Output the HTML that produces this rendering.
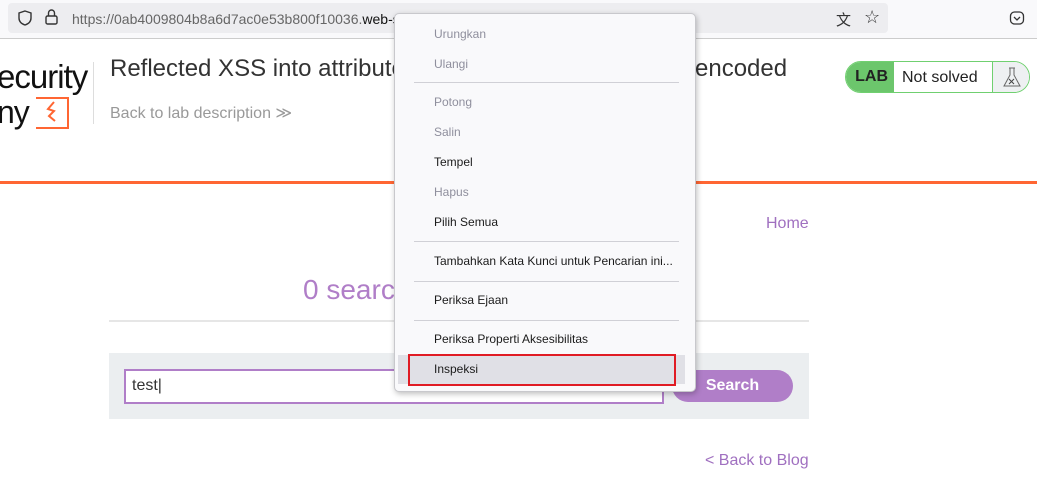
<!DOCTYPE html><html><head><style>
body{margin:0;width:1037px;height:483px;overflow:hidden;background:#fff;font-family:"Liberation Sans",sans-serif;position:relative}
.a{position:absolute}
.mi{position:absolute;left:434px;font-size:12px;color:#1b1b1b}
.dis{color:#8f8f9d}
.sep{position:absolute;left:414px;width:265px;height:1px;background:#d0d0d6}
</style></head><body>
<div class="a" style="left:0;top:0;width:1037px;height:38px;background:#f9f9fb;border-bottom:1px solid #ccc"></div>
<div class="a" style="left:8px;top:3px;width:880px;height:30px;background:#ededf0;border-radius:4px"></div>
<svg class="a" style="left:16px;top:9px" width="18" height="18"><path d="M9 2 L15 4 V9 Q15 14 9 16 Q3 14 3 9 V4Z" fill="none" stroke="#333" stroke-width="1.4"/></svg>
<svg class="a" style="left:44px;top:8px" width="16" height="18"><rect x="2" y="8" width="11" height="8" rx="1.5" fill="none" stroke="#333" stroke-width="1.4"/><path d="M4.5 8V5a3 3 0 0 1 6 0v3" fill="none" stroke="#333" stroke-width="1.4"/></svg>
<div class="a" style="left:72px;top:11px;font-size:14px;color:#666">https://0ab4009804b8a6d7ac0e53b800f10036.<span style="color:#111">web-se</span></div>
<div class="a" style="left:836px;top:9px;font-size:15px;color:#333">文</div>
<div class="a" style="left:864px;top:7px;font-size:18px;color:#333">☆</div>
<svg class="a" style="left:1009px;top:10px" width="16" height="16"><rect x="1.5" y="2" width="13" height="12" rx="4" fill="none" stroke="#333" stroke-width="1.3"/><path d="M5 7l3 3 3-3" fill="none" stroke="#333" stroke-width="1.3"/></svg>

<div class="a" style="left:-3px;top:58px;font-size:33px;color:#111;letter-spacing:-1px">ecurity</div>
<div class="a" style="left:-3px;top:94px;font-size:32px;color:#111;letter-spacing:-1px">ny</div>
<div class="a" style="left:36px;top:97px;width:31px;height:28px;border:2px solid #ff6633;border-left:none"></div>
<svg class="a" style="left:44px;top:100px" width="16" height="24"><path d="M10 2 L4 9 L10 11 L5 16 L11 21" fill="none" stroke="#ff6633" stroke-width="2"/></svg>
<div class="a" style="left:93px;top:62px;width:1px;height:62px;background:#ddd"></div>
<div class="a" style="left:110px;top:55px;font-size:24px;color:#333">Reflected XSS into attribute</div>
<div class="a" style="left:695px;top:55px;font-size:24px;color:#333">encoded</div>
<div class="a" style="left:110px;top:103px;font-size:16px;color:#999">Back to lab description ≫</div>
<div class="a" style="left:845px;top:61px;width:183px;height:30px;border:1px solid #70d070;border-radius:16px;overflow:hidden;background:#fff">
<div class="a" style="left:0;top:0;width:48px;height:30px;background:#6cc66c;font-weight:bold;font-size:16px;color:#222;line-height:30px;text-align:right"><span style="margin-right:6px">LAB</span></div>
<div class="a" style="left:56px;top:7px;font-size:16px;color:#222">Not solved</div>
<div class="a" style="left:146px;top:0;width:38px;height:30px;background:#eef0f2;border-left:1px solid #70d070"></div>
<svg class="a" style="left:155px;top:3px" width="22" height="24"><path d="M8 3h6M9 3v7L3 21h16L13 10V3" fill="none" stroke="#666" stroke-width="1"/><path d="M8 14l5 5M13 14l-5 5" stroke="#444" stroke-width="1"/></svg>
</div>
<div class="a" style="left:0;top:181px;width:1037px;height:3px;background:#ff6633"></div>
<div class="a" style="left:766px;top:215px;font-size:16px;color:#a070c0">Home</div>
<div class="a" style="left:303px;top:274px;font-size:28px;color:#b07ec8">0 searc</div>
<div class="a" style="left:109px;top:320px;width:700px;height:2px;background:#e6e6e6"></div>
<div class="a" style="left:109px;top:353px;width:700px;height:66px;background:#ebeef0"></div>
<div class="a" style="left:124px;top:369px;width:536px;height:31px;border:2px solid #b07ec8;background:#fff"></div>
<div class="a" style="left:132px;top:377px;font-size:16px;color:#333">test|</div>
<div class="a" style="left:672px;top:370px;width:121px;height:32px;border-radius:16px;background:#b07ec8;color:#fff;font-weight:bold;font-size:16px;line-height:32px;text-align:center">Search</div>
<div class="a" style="left:705px;top:452px;font-size:16px;color:#a070c0">&lt; Back to Blog</div>

<div class="a" style="left:394px;top:13px;width:300px;height:377px;background:#f9f9fb;border:1px solid #c8c8cc;border-radius:5px;box-shadow:1px 2px 6px rgba(0,0,0,.25)"></div>
<div class="mi dis" style="top:27px">Urungkan</div>
<div class="mi dis" style="top:57px">Ulangi</div>
<div class="sep" style="top:82px"></div>
<div class="mi dis" style="top:95px">Potong</div>
<div class="mi dis" style="top:125px">Salin</div>
<div class="mi" style="top:155px">Tempel</div>
<div class="mi dis" style="top:185px">Hapus</div>
<div class="mi" style="top:215px">Pilih Semua</div>
<div class="sep" style="top:241px"></div>
<div class="mi" style="top:254px">Tambahkan Kata Kunci untuk Pencarian ini...</div>
<div class="sep" style="top:281px"></div>
<div class="mi" style="top:293px">Periksa Ejaan</div>
<div class="sep" style="top:320px"></div>
<div class="mi" style="top:332px">Periksa Properti Aksesibilitas</div>
<div class="a" style="left:398px;top:355px;width:287px;height:29px;background:#e0e0e6"></div>
<div class="a" style="left:408px;top:354px;width:264px;height:28px;border:2px solid #e01b24"></div>
<div class="mi" style="top:362px">Inspeksi</div>
</body></html>
